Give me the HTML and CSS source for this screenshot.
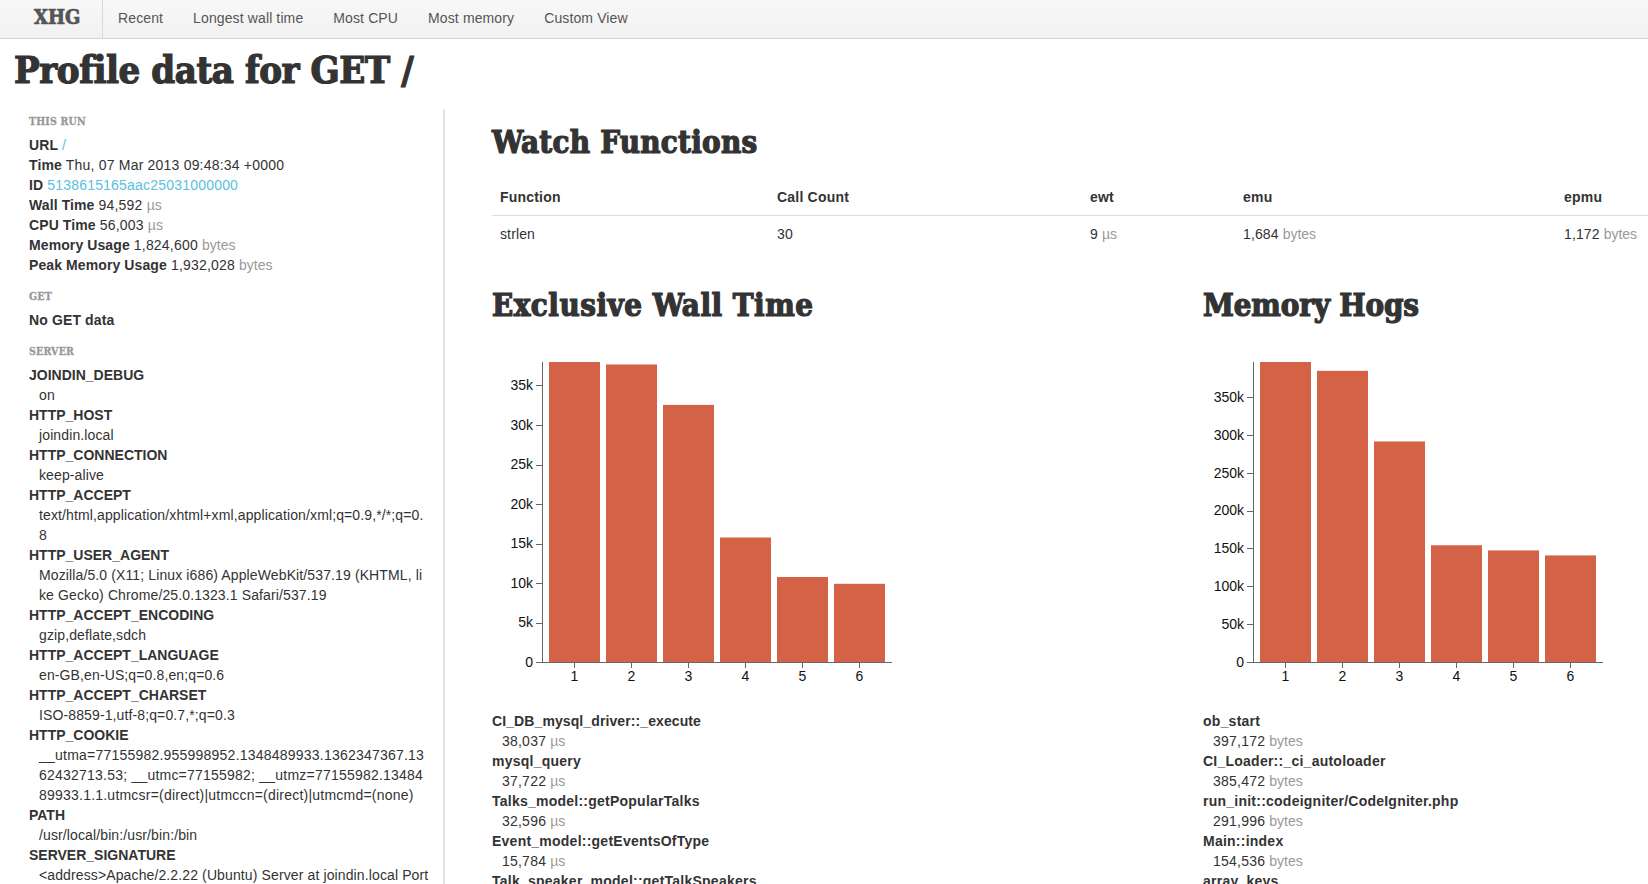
FILE: index.html
```html
<!DOCTYPE html>
<html lang="en">
<head>
<meta charset="utf-8">
<title>XHGui - Profile data</title>
<link rel="stylesheet" href="styles.css">
</head>
<body>
<nav class="navbar">
  <a class="brand" href="#">XHG</a>
  <ul class="nav-links">
    <li><a href="#">Recent</a></li>
    <li><a href="#">Longest wall time</a></li>
    <li><a href="#">Most CPU</a></li>
    <li><a href="#">Most memory</a></li>
    <li><a href="#">Custom View</a></li>
  </ul>
</nav>
<h1 class="page-title">Profile data for GET /</h1>
<div class="layout">
  <aside class="sidebar">
    <h4>This Run</h4>
    <dl>
      <div><dt>URL</dt> <dd class="inline"><a href="#">/</a></dd></div>
      <div><dt>Time</dt> <dd class="inline">Thu, 07 Mar 2013 09:48:34 +0000</dd></div>
      <div><dt>ID</dt> <dd class="inline"><a href="#">5138615165aac25031000000</a></dd></div>
      <div><dt>Wall Time</dt> <dd class="inline">94,592 <span class="units">µs</span></dd></div>
      <div><dt>CPU Time</dt> <dd class="inline">56,003 <span class="units">µs</span></dd></div>
      <div><dt>Memory Usage</dt> <dd class="inline">1,824,600 <span class="units">bytes</span></dd></div>
      <div><dt>Peak Memory Usage</dt> <dd class="inline">1,932,028 <span class="units">bytes</span></dd></div>
    </dl>
    <h4>GET</h4>
    <p class="empty">No GET data</p>
    <h4>SERVER</h4>
    <dl class="stacked">
      <dt>JOINDIN_DEBUG</dt><dd>on</dd>
      <dt>HTTP_HOST</dt><dd>joindin.local</dd>
      <dt>HTTP_CONNECTION</dt><dd>keep-alive</dd>
      <dt>HTTP_ACCEPT</dt><dd>text/html,application/xhtml+xml,application/xml;q=0.9,*/*;q=0.8</dd>
      <dt>HTTP_USER_AGENT</dt><dd>Mozilla/5.0 (X11; Linux i686) AppleWebKit/537.19 (KHTML, like Gecko) Chrome/25.0.1323.1 Safari/537.19</dd>
      <dt>HTTP_ACCEPT_ENCODING</dt><dd>gzip,deflate,sdch</dd>
      <dt>HTTP_ACCEPT_LANGUAGE</dt><dd>en-GB,en-US;q=0.8,en;q=0.6</dd>
      <dt>HTTP_ACCEPT_CHARSET</dt><dd>ISO-8859-1,utf-8;q=0.7,*;q=0.3</dd>
      <dt>HTTP_COOKIE</dt><dd class="num">__utma=77155982.955998952.1348489933.1362347367.1362432713.53; __utmc=77155982; __utmz=77155982.1348489933.1.1.utmcsr=(direct)|utmccn=(direct)|utmcmd=(none)</dd>
      <dt>PATH</dt><dd>/usr/local/bin:/usr/bin:/bin</dd>
      <dt>SERVER_SIGNATURE</dt><dd>&lt;address&gt;Apache/2.2.22 (Ubuntu) Server at joindin.local Port 80&lt;/address&gt;</dd>
    </dl>
  </aside>
  <main class="content">
    <h2 class="watch-title">Watch Functions</h2>
    <table class="watch-table">
      <colgroup>
        <col class="col-fn"><col class="col-count"><col class="col-ewt"><col class="col-emu"><col class="col-epmu">
      </colgroup>
      <thead>
        <tr><th>Function</th><th>Call Count</th><th>ewt</th><th>emu</th><th>epmu</th></tr>
      </thead>
      <tbody>
        <tr>
          <td>strlen</td><td>30</td>
          <td>9 <span class="units">µs</span></td>
          <td>1,684 <span class="units">bytes</span></td>
          <td>1,172 <span class="units">bytes</span></td>
        </tr>
      </tbody>
    </table>
    <div class="charts">
      <section class="chart-col first">
        <h2 class="wall-title">Exclusive Wall Time</h2>
        <svg class="chart" width="420" height="371" viewBox="0 0 420 371" role="img" aria-label="Exclusive wall time chart">
          <rect class="bar" x="57" y="22" width="51" height="300"/>
          <rect class="bar" x="114" y="24.48" width="51" height="297.52"/>
          <rect class="bar" x="171" y="64.91" width="51" height="257.09"/>
          <rect class="bar" x="228" y="197.51" width="51" height="124.49"/>
          <rect class="bar" x="285" y="237" width="51" height="85"/>
          <rect class="bar" x="342" y="243.8" width="51" height="78.2"/>
          <g class="axis">
            <path d="M50.5 22V322.5M44 322.5H400"/>
            <path d="M44 283H50M44 243.5H50M44 204H50M44 164.5H50M44 125H50M44 85.5H50M44 45.5H50"/>
            <path d="M82.5 322V328M139.5 322V328M196.5 322V328M253.5 322V328M310.5 322V328M367.5 322V328"/>
          </g>
          <g class="y-labels">
            <text x="41" y="327">0</text><text x="41" y="287">5k</text><text x="41" y="248">10k</text><text x="41" y="208">15k</text><text x="41" y="169">20k</text><text x="41" y="129">25k</text><text x="41" y="90">30k</text><text x="41" y="50">35k</text>
          </g>
          <g class="x-labels">
            <text x="82.5" y="341">1</text><text x="139.5" y="341">2</text><text x="196.5" y="341">3</text><text x="253.5" y="341">4</text><text x="310.5" y="341">5</text><text x="367.5" y="341">6</text>
          </g>
        </svg>
        <dl class="stacked">
          <dt class="tight">CI_DB_mysql_driver::_execute</dt><dd>38,037 <span class="units">µs</span></dd>
          <dt>mysql_query</dt><dd>37,722 <span class="units">µs</span></dd>
          <dt>Talks_model::getPopularTalks</dt><dd>32,596 <span class="units">µs</span></dd>
          <dt>Event_model::getEventsOfType</dt><dd>15,784 <span class="units">µs</span></dd>
          <dt>Talk_speaker_model::getTalkSpeakers</dt>
        </dl>
      </section>
      <section class="chart-col">
        <h2 class="mem-title">Memory Hogs</h2>
        <svg class="chart" width="420" height="371" viewBox="0 0 420 371" role="img" aria-label="Memory hogs chart">
          <rect class="bar" x="57" y="22" width="51" height="300"/>
          <rect class="bar" x="114" y="30.84" width="51" height="291.16"/>
          <rect class="bar" x="171" y="101.44" width="51" height="220.56"/>
          <rect class="bar" x="228" y="205.27" width="51" height="116.73"/>
          <rect class="bar" x="285" y="210.4" width="51" height="111.6"/>
          <rect class="bar" x="342" y="215.4" width="51" height="106.6"/>
          <g class="axis">
            <path d="M50.5 22V322.5M44 322.5H400"/>
            <path d="M44 284.5H50M44 246.5H50M44 208.5H50M44 171H50M44 133H50M44 95.5H50M44 57.5H50"/>
            <path d="M82.5 322V328M139.5 322V328M196.5 322V328M253.5 322V328M310.5 322V328M367.5 322V328"/>
          </g>
          <g class="y-labels">
            <text x="41" y="327">0</text><text x="41" y="289">50k</text><text x="41" y="251">100k</text><text x="41" y="213">150k</text><text x="41" y="175">200k</text><text x="41" y="138">250k</text><text x="41" y="100">300k</text><text x="41" y="62">350k</text>
          </g>
          <g class="x-labels">
            <text x="82.5" y="341">1</text><text x="139.5" y="341">2</text><text x="196.5" y="341">3</text><text x="253.5" y="341">4</text><text x="310.5" y="341">5</text><text x="367.5" y="341">6</text>
          </g>
        </svg>
        <dl class="stacked">
          <dt>ob_start</dt><dd>397,172 <span class="units">bytes</span></dd>
          <dt>CI_Loader::_ci_autoloader</dt><dd>385,472 <span class="units">bytes</span></dd>
          <dt>run_init::codeigniter/CodeIgniter.php</dt><dd>291,996 <span class="units">bytes</span></dd>
          <dt>Main::index</dt><dd>154,536 <span class="units">bytes</span></dd>
          <dt>array_keys</dt>
        </dl>
      </section>
    </div>
  </main>
</div>
</body>
</html>
```
FILE: styles.css
```css
html {
  overflow: hidden;
}
body {
  margin: 0;
  font-family: "Liberation Sans", Arial, sans-serif;
  font-size: 14px;
  line-height: 20px;
  letter-spacing: 0.12px;
  color: #333;
  background: #fff;
}
a {
  color: #5bc0de;
  text-decoration: none;
}
.navbar {
  display: flex;
  height: 38px;
  background: linear-gradient(#f8f8f8, #f1f1f1);
  border-bottom: 1px solid #d4d4d4;
}
.brand {
  width: 103px;
  box-sizing: border-box;
  padding-left: 34px;
  border-right: 1px solid #d8d8d8;
  font-family: "DejaVu Serif Condensed", "DejaVu Serif", serif;
  font-weight: 700;
  font-size: 20px;
  line-height: 34px;
  letter-spacing: 0;
  color: #555;
  -webkit-text-stroke: 0.7px #555;
}
.nav-links {
  display: flex;
  margin: 0;
  padding: 0;
  list-style: none;
}
.nav-links a {
  display: block;
  padding: 8px 15px 10px;
  color: #555;
}
.page-title,
h2 {
  font-family: "DejaVu Serif Condensed", "DejaVu Serif", serif;
  font-weight: 700;
  margin: 0;
  color: #333;
  -webkit-text-stroke: 1.2px #333;
}
.page-title {
  height: 70px;
  padding-left: 14px;
  font-size: 38px;
  line-height: 62px;
  letter-spacing: -0.45px;
}
h2 {
  font-size: 31px;
  line-height: 40px;
  letter-spacing: 0;
}
.watch-title {
  padding-top: 1px;
  letter-spacing: 0.27px;
}
.wall-title {
  letter-spacing: 0.5px;
}
.mem-title {
  letter-spacing: -0.15px;
}
.layout {
  display: flex;
}
.sidebar {
  flex: none;
  box-sizing: border-box;
  width: 445px;
  height: 800px;
  padding: 1px 0 0 29px;
  border-right: 2px solid #e5e5e5;
}
.sidebar h4 {
  margin: 11px 0 4px;
  font-family: "DejaVu Serif Condensed", "DejaVu Serif", serif;
  font-size: 10.5px;
  font-weight: 700;
  line-height: 20px;
  letter-spacing: 0.2px;
  text-transform: uppercase;
  color: #999;
  -webkit-text-stroke: 0.3px #999;
}
.sidebar h4:first-child {
  margin-top: 1px;
}
dl {
  margin: 0;
}
.sidebar dl {
  width: 399.5px;
}
dt {
  display: inline;
  font-weight: 700;
  letter-spacing: 0.1px;
}
dd {
  margin: 0;
}
dd.inline {
  display: inline;
  letter-spacing: 0.2px;
}
.stacked dt {
  display: block;
}
.sidebar .stacked dt {
  letter-spacing: 0;
}
.chart-col dt {
  letter-spacing: 0.24px;
}
.chart-col dt.tight {
  letter-spacing: 0.1px;
}
.stacked dd {
  margin-left: 10px;
  word-break: break-all;
}
.stacked dd.num,
.chart-col dd {
  letter-spacing: 0.22px;
}
.empty {
  margin: 0;
  font-weight: 700;
}
.units {
  color: #999;
  letter-spacing: 0;
}
.content {
  flex: 1;
  min-width: 0;
  padding: 12px 0 0 47px;
}
.watch-table {
  table-layout: fixed;
  width: 1156px;
  margin-top: 17px;
  border-collapse: collapse;
}
.col-fn { width: 277px; }
.col-count { width: 313px; }
.col-ewt { width: 153px; }
.col-emu { width: 321px; }
.col-epmu { width: 92px; }
.watch-table th,
.watch-table td {
  padding: 8px;
  text-align: left;
  white-space: nowrap;
}
.watch-table th {
  border-bottom: 1px solid #ddd;
  letter-spacing: 0.2px;
}
.charts {
  display: flex;
  margin-top: 33px;
}
.chart-col {
  flex: none;
}
.chart-col.first {
  width: 711px;
}
.chart {
  display: block;
  margin-top: 15px;
}
.bar {
  fill: #d46246;
}
.axis path {
  fill: none;
  stroke: #666;
  stroke-width: 1;
  shape-rendering: crispEdges;
}
.y-labels text,
.x-labels text {
  font-family: "Liberation Sans", Arial, sans-serif;
  font-size: 14px;
  letter-spacing: 0;
  fill: #111;
}
.y-labels text {
  text-anchor: end;
}
.x-labels text {
  text-anchor: middle;
}
```
